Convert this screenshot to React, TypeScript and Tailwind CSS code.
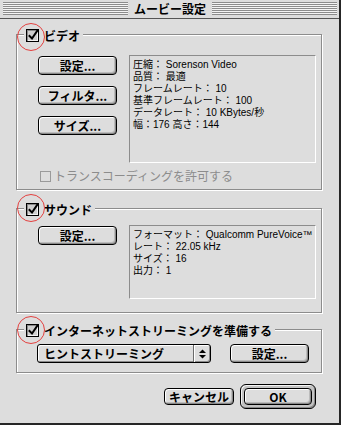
import React from "react";

const font = "font-['Noto_Sans_CJK_JP','Noto_Sans_CJK_SC',sans-serif]";

function Check() {
  return (
    <span className="relative block w-[13px] h-[13px] border border-black bg-[#cfcfcf] shadow-[inset_1px_1px_0_#8a8a8a,inset_-1px_-1px_0_#f2f2f2]">
      <svg className="absolute left-[0px] top-[-2px]" width="13" height="14" viewBox="0 0 13 14">
        <path d="M2.5 8 L5 10.5 L10.5 2.5" stroke="#000" strokeWidth="2" fill="none" strokeLinecap="square" />
      </svg>
    </span>
  );
}

function Btn({ children, className = "" }: { children: React.ReactNode; className?: string }) {
  return (
    <div
      className={`flex items-center justify-center border border-black rounded-[4px] bg-[#dddddd] shadow-[inset_1px_1px_0_#ffffff,inset_-1px_-1px_0_#8a8a8a,inset_-2px_-2px_0_#bbbbbb] text-[12px] font-bold leading-none text-black ${className}`}
    >
      {children}
    </div>
  );
}

function Group({
  label,
  circleClass,
  className,
  children,
}: {
  label: string;
  circleClass: string;
  className: string;
  children: React.ReactNode;
}) {
  return (
    <div
      className={`relative ml-[16px] w-[306px] border border-[#8c8c8c] shadow-[inset_1px_1px_0_#ffffff,1px_1px_0_#ffffff] ${className}`}
    >
      <div className="absolute left-[7px] top-[-6px] z-10 flex items-center bg-[#dddddd] pl-[2px] pr-[3px]">
        <div className="relative">
          <Check />
          <div className={`absolute left-[-9px] w-[28px] h-[28px] rounded-full border border-[#e3403f] ${circleClass}`} />
        </div>
        <span className="ml-[5px] text-[12px] font-bold leading-[13px] text-black">{label}</span>
      </div>
      {children}
    </div>
  );
}

function Info({ lines, className }: { lines: string[]; className: string }) {
  return (
    <div
      className={`border border-t-[#8c8c8c] border-l-[#8c8c8c] border-b-white border-r-white pl-[3px] pt-[3px] font-['Liberation_Sans','Noto_Sans_CJK_JP',sans-serif] text-[10px] leading-[12px] text-black ${className}`}
    >
      {lines.map((l) => (
        <div key={l} className="whitespace-nowrap h-[12px]">
          {l}
        </div>
      ))}
    </div>
  );
}

const Stripes = () => (
  <div className="flex-1 h-[13px] bg-[repeating-linear-gradient(to_bottom,#8c8c8c_0px,#8c8c8c_1px,#f4f4f4_1px,#f4f4f4_2px)]" />
);

export default function App() {
  return (
    <div
      className={`${font} w-[341px] h-[425px] overflow-hidden bg-[#dddddd] border-r-[2px] border-b-[2px] border-[#262626] flex flex-col text-black`}
    >
      <div className="h-[19px] shrink-0 flex items-center border-b border-[#555555] pl-[3px] pr-[2px] pb-[1px]">
        <Stripes />
        <div className="px-[6px] text-[12px] font-bold leading-none">ムービー設定</div>
        <Stripes />
      </div>

      <Group label="ビデオ" circleClass="top-[-6px]" className="mt-[15px] h-[156px] shrink-0">
        <div className="pt-[20px] pl-[21px]">
          <div className="flex gap-[12px]">
            <div className="mt-[1px] flex flex-col gap-[11px]">
              <Btn className="w-[79px] h-[19px]">設定...</Btn>
              <Btn className="w-[79px] h-[19px]">フィルタ...</Btn>
              <Btn className="w-[79px] h-[19px]">サイズ...</Btn>
            </div>
            <Info
              className="w-[187px] h-[108px]"
              lines={[
                "圧縮： Sorenson Video",
                "品質： 最適",
                "フレームレート： 10",
                "基準フレームレート： 100",
                "データレート： 10 KBytes/秒",
                "幅：176 高さ：144",
              ]}
            />
          </div>
          <div className="mt-[7px] ml-[2px] flex items-center">
            <span className="block w-[11px] h-[11px] border border-[#9a9a9a]" />
            <span className="ml-[3px] text-[12px] leading-[12px] text-[#8c8c8c]">トランスコーディングを許可する</span>
          </div>
        </div>
      </Group>

      <Group label="サウンド" circleClass="top-[-9px]" className="mt-[18px] h-[105px] shrink-0">
        <div className="pt-[16px] pl-[21px] flex gap-[12px]">
          <div className="mt-[1px]">
            <Btn className="w-[79px] h-[19px]">設定...</Btn>
          </div>
          <Info
            className="w-[187px] h-[74px]"
            lines={["フォーマット： Qualcomm PureVoice™", "レート： 22.05 kHz", "サイズ： 16", "出力： 1"]}
          />
        </div>
      </Group>

      <Group
        label="インターネットストリーミングを準備する"
        circleClass="top-[-8px]"
        className="mt-[16px] h-[44px] shrink-0"
      >
        <div className="pt-[14px] pl-[20px] flex items-start">
          <div className="w-[174px] h-[19px] flex border border-black rounded-[3px] bg-[#dddddd] shadow-[inset_1px_1px_0_#ffffff,inset_-1px_-1px_0_#8a8a8a]">
            <div className="flex-1 flex items-center pl-[6px] text-[12px] font-bold leading-none">ヒントストリーミング</div>
            <div className="w-[17px] flex items-center justify-center border-l border-[#6a6a6a] shadow-[inset_1px_0_0_#ffffff]">
              <svg width="7" height="10" viewBox="0 0 7 10">
                <path d="M3.5 0.5 L7 4 L0 4 Z" fill="#000" />
                <path d="M0 6 L7 6 L3.5 9.5 Z" fill="#000" />
              </svg>
            </div>
          </div>
          <Btn className="ml-[19px] w-[79px] h-[19px]">設定...</Btn>
        </div>
      </Group>

      <div className="mt-[11px] flex items-center justify-end gap-[6px] pr-[23px]">
        <Btn className="w-[70px] h-[17px] rounded-[3px]">キャンセル</Btn>
        <div className="w-[76px] h-[25px] border border-black rounded-[6px] p-[3px] bg-[#c4c4c4] shadow-[inset_1px_1px_0_#f4f4f4,inset_-1px_-1px_0_#8a8a8a]">
          <Btn className="w-[68px] h-[17px] rounded-[3px]">OK</Btn>
        </div>
      </div>
    </div>
  );
}
